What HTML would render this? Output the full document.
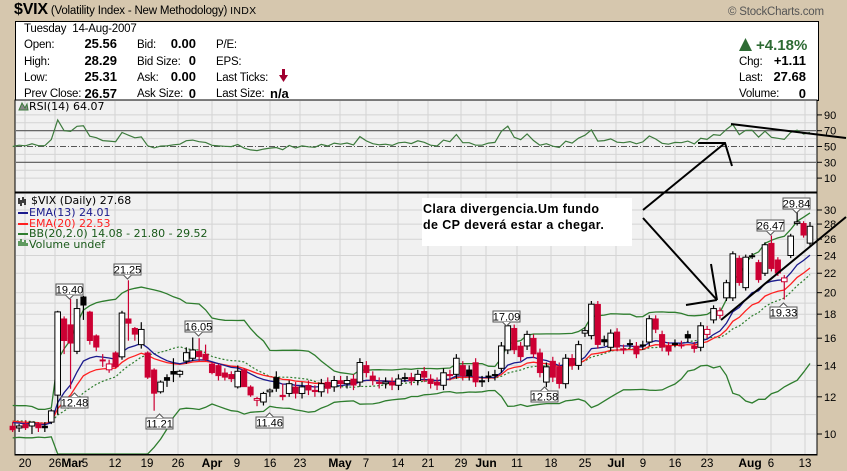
<!DOCTYPE html>
<html style="overflow:hidden;width:847px;height:471px"><head><meta charset="utf-8"><style>
html,body{overflow:hidden}
body{margin:0;width:847px;height:471px;background:#d6c7ae;position:relative;overflow:hidden;font-family:"Liberation Sans",Arial,sans-serif;}
.a{position:absolute;white-space:nowrap;font-size:11.5px;letter-spacing:-0.2px;color:#000;line-height:14px}
.b{font-weight:bold;font-size:13px;letter-spacing:0}
.r{text-align:right}
svg{display:block}
</style></head><body>
<div class="a" style="left:14px;top:3px;"><span style="font-weight:bold;font-size:16px">$VIX</span> <span style="font-size:11.5px">(Volatility Index - New Methodology)</span> <span style="font-size:10.5px;letter-spacing:.3px">INDX</span></div>
<div class="a" style="left:728px;top:5px;font-size:11.5px;color:#555">© StockCharts.com</div>
<div style="position:absolute;left:15px;top:21px;width:802px;height:78px;background:#fff;border:1px solid #000;"></div>
<div class="a" style="left:24px;top:22px">Tuesday&nbsp; 14-Aug-2007</div>
<div class="a" style="left:24px;top:38px">Open:</div><div class="a b r" style="left:60px;width:57px;top:37px">25.56</div>
<div class="a" style="left:24px;top:55px">High:</div><div class="a b r" style="left:60px;width:57px;top:54px">28.29</div>
<div class="a" style="left:24px;top:71px">Low:</div><div class="a b r" style="left:60px;width:57px;top:70px">25.31</div>
<div class="a" style="left:24px;top:87px">Prev Close:</div><div class="a b r" style="left:60px;width:57px;top:87px">26.57</div>
<div class="a" style="left:137px;top:38px">Bid:</div><div class="a b r" style="left:150px;width:46px;top:37px">0.00</div>
<div class="a" style="left:137px;top:55px">Bid Size:</div><div class="a b r" style="left:150px;width:46px;top:54px">0</div>
<div class="a" style="left:137px;top:71px">Ask:</div><div class="a b r" style="left:150px;width:46px;top:70px">0.00</div>
<div class="a" style="left:137px;top:87px">Ask Size:</div><div class="a b r" style="left:150px;width:46px;top:87px">0</div>
<div class="a" style="left:216px;top:38px">P/E:</div>
<div class="a" style="left:216px;top:55px">EPS:</div>
<div class="a" style="left:216px;top:71px">Last Ticks:</div>
<div class="a" style="left:216px;top:87px">Last Size:</div><div class="a b" style="left:270px;top:87px">n/a</div>
<svg style="position:absolute;left:278px;top:69px" width="12" height="14"><rect x="4" y="0" width="3" height="8" fill="#a00030"/><polygon points="1,6 10,6 5.5,13" fill="#a00030"/></svg>
<svg style="position:absolute;left:739px;top:38px" width="14" height="14"><polygon points="0,13 13,13 6.5,0" fill="#2e6b34"/></svg>
<div class="a" style="left:756px;top:37px;font-size:15px;font-weight:bold;color:#2e6b34;line-height:17px;letter-spacing:0">+4.18%</div>
<div class="a" style="left:739px;top:55px">Chg:</div><div class="a b r" style="left:760px;width:46px;top:54px">+1.11</div>
<div class="a" style="left:739px;top:71px">Last:</div><div class="a b r" style="left:760px;width:46px;top:70px">27.68</div>
<div class="a" style="left:739px;top:87px">Volume:</div><div class="a b r" style="left:760px;width:46px;top:87px">0</div>

<svg id="s" style="position:absolute;left:0;top:0;overflow:hidden" width="847" height="471" xmlns="http://www.w3.org/2000/svg"></svg>
<script>
var NS="http://www.w3.org/2000/svg",S=document.getElementById('s');
function el(t,a,txt){var e=document.createElementNS(NS,t);for(var k in a)e.setAttribute(k,a[k]);if(txt!=null)e.textContent=txt;S.appendChild(e);return e;}
var seed=[10.9,10.4,11.3,11.6,10.8,10.2,10.5,11.1,11.5,10.6,10.1,10.9,11.4,10.7,10.3,11.0,10.6,10.1,10.5,11.2,11.0,10.4,10.2,10.6];
var D=[[10.4,10.6,10.1,10.2],[10.3,10.5,10.1,10.4],[10.5,10.7,10.2,10.3],[10.4,10.6,10.0,10.6],[10.5,10.6,10.1,10.3],[10.4,10.6,10.1,10.3],[10.6,11.3,10.5,11.2],[12.1,18.3,11.0,18.2],[17.6,17.8,14.8,15.8],[17.1,19.4,12.48,15.6],[15.0,19.4,14.8,18.5],[19.6,19.7,17.5,18.8],[18.2,18.3,15.5,15.8],[16.2,16.3,15.0,15.3],[14.4,14.8,13.9,14.3],[13.7,14.4,13.5,14.1],[14.9,15.0,13.8,13.9],[14.6,18.3,14.4,18.1],[17.6,21.25,15.8,17.2],[16.8,16.9,15.8,16.3],[15.5,17.3,15.2,16.7],[14.9,15.0,13.1,13.2],[13.7,13.8,11.21,12.2],[12.3,13.0,12.2,12.9],[13.2,13.4,12.6,13.0],[13.6,14.5,12.9,13.4],[13.4,13.7,13.2,13.6],[14.3,15.3,14.1,14.9],[14.5,16.05,14.3,15.1],[15.0,16.0,14.3,14.6],[14.8,15.5,14.3,14.4],[14.1,14.2,13.4,13.5],[14.0,14.1,13.0,13.3],[13.5,13.8,13.0,13.2],[13.4,13.6,12.9,13.1],[12.6,14.0,12.5,13.6],[13.7,13.8,12.6,12.6],[12.6,12.7,12.0,12.1],[11.8,12.0,11.46,11.9],[11.7,12.3,11.5,12.2],[12.3,12.5,12.0,12.4],[13.2,13.6,12.3,12.5],[12.1,12.8,11.8,12.0],[12.2,13.0,12.0,12.8]];
var M=[[12.6,12.2],[12.2,12.6],[12.7,12.4],[12.4,12.3],[12.3,12.8],[12.9,12.5],[12.6,13.0],
[13.0,12.8],[12.8,13.0],[13.1,12.7],[12.9,14.2],[14.0,13.5],[13.3,13.0],[12.9,12.8],[12.8,12.9],[12.9,12.7],[12.7,13.1],[13.2,13.2],[13.2,13.0],[13.0,13.4],[13.6,13.2],[13.1,12.8],[12.9,12.7],[12.7,13.5],[13.4,13.3],[13.4,14.5],[14.0,13.3],[13.7,13.3],[14.2,12.9],
[13.0,12.9],[13.3,13.2],[13.4,13.3],[13.8,15.4],[15.1,17.0,17.09],[16.8,15.1],[15.4,14.6],[15.4,16.3],[16.0,14.8],[14.9,13.5],[12.9,13.9,0,12.58],[14.3,13.2],[13.9,12.8],[12.8,14.5],[14.5,14.0],[14.0,15.5],[16.4,16.6],[16.2,18.9],[18.9,15.5],[15.9,15.7],[15.3,16.4],
[16.5,15.3],[15.2,15.1],[15.6,15.5],[15.4,14.8],[15.5,15.4],[15.7,17.6],[17.6,16.7],[16.3,15.3],[15.4,15.0],[15.6,15.6],[15.5,15.5],[16.3,16.0],[15.4,15.2],[15.3,17.0],
[16.3,16.7],[17.5,18.5],[17.9,18.3],[19.5,21.0],[19.5,24.2],[23.7,21.0],[20.5,23.8],[24.0,23.9],[23.2,21.3],[22.0,25.3],[25.5,22.5,26.47],[23.5,22.0],[21.1,21.5,0,19.33],[24.0,26.4],[28.1,28.3,29.84],[28.1,26.5],[25.5,27.7,28.29]];
M.forEach(function(m){var o=m[0],c=m[1];var h=m[2]||Math.max(o,c)+0.3,l=m[3]||Math.min(o,c)-0.3;D.push([o,h,l,c]);});
var N=D.length;
function X(k){return 810-(N-1-k)*6.43;}
function Y(p){if(!(p>0))p=8;var y=903.5-203.9*Math.log(p);return Math.max(194,Math.min(454,y));}
function RY(v){return 186-0.79*v;}
el('rect',{x:15,y:100,width:802,height:92,fill:'#f1f1f1',stroke:'#000','stroke-width':1});
el('rect',{x:15,y:193,width:802,height:262,fill:'#f1f1f1',stroke:'#000','stroke-width':1});
var dl=[[25,'20'],[55,'26'],[72,'Mar'],[85,'5'],[115,'12'],[147,'19'],[178,'26'],[212,'Apr'],[237,'9'],[270,'16'],[300,'23'],[340,'May'],[366,'7'],[398,'14'],[428,'21'],[461,'29'],[486,'Jun'],[517,'11'],[551,'18'],[585,'25'],[616,'Jul'],[643,'9'],[675,'16'],[707,'23'],[750,'Aug'],[771,'6'],[805,'13']];
var g='';
dl.forEach(function(d){if(d[1]!='Mar'&&d[1]!='Aug'){g+='M'+d[0]+' 101V191M'+d[0]+' 194V454';}});
[10,11,12,13,14,15,16,17,18,19,20,22,24,26,28,30].forEach(function(p){var y=Y(p).toFixed(1);g+='M16 '+y+'H816';});
[90,80,60,40,20,10].forEach(function(v){var y=RY(v).toFixed(1);g+='M16 '+y+'H816';});
el('path',{d:g,stroke:'#d4d4d4','stroke-width':1,fill:'none'});
dl.forEach(function(d){var big=/[a-z]/i.test(d[1]);el('text',{x:d[0],y:467,'text-anchor':'middle','font-size':big?'12':'11.5','font-weight':big?'bold':'normal','font-family':'Liberation Sans, sans-serif',fill:'#000'},d[1]);});
[10,12,14,16,18,20,22,24,26,28,30].forEach(function(p){var y=Y(p);el('path',{d:'M817 '+y+'H822',stroke:'#000'});el('text',{x:824,y:y+4,'font-size':'11','font-family':'Liberation Sans, sans-serif'},p);});
[90,70,50,30,10].forEach(function(v){var y=RY(v);el('path',{d:'M817 '+y+'H822',stroke:'#000'});el('text',{x:824,y:y+4,'font-size':'11','font-family':'Liberation Sans, sans-serif'},v);});
var C=seed.concat(D.map(function(d){return d[3];}));var off=seed.length;
function ema(n){var a=[],k=2/(n+1),e=C[0];for(var i=0;i<C.length;i++){e=i?C[i]*k+e*(1-k):C[i];a.push(e);}return a;}
var e13=ema(13),e20=ema(20),sm=[],up=[],lo=[];
for(var i=0;i<C.length;i++){var s=0,q=0,n=Math.min(20,i+1);for(var j=i-n+1;j<=i;j++){s+=C[j];}var m=s/n;for(j=i-n+1;j<=i;j++)q+=(C[j]-m)*(C[j]-m);var sd=Math.sqrt(q/n);sm.push(m);up.push(m+2*sd);lo.push(m-2*sd);}
var rsi=[],ag=0,al=0;for(i=1;i<C.length;i++){var ch=C[i]-C[i-1];var gg=ch>0?ch:0,ll=ch<0?-ch:0;if(i<=14){ag+=gg/14;al+=ll/14;}else{ag=(ag*13+gg)/14;al=(al*13+ll)/14;}rsi[i]=100-100/(1+ag/(al||1e-9));}
function line(arr,st){var p='';for(var k=0;k<N;k++){p+=(k?'L':'M')+X(k).toFixed(1)+' '+Y(arr[k+off]).toFixed(1);}el('path',Object.assign({d:p,fill:'none'},st));}
line(up,{stroke:'#2e7d2e','stroke-width':1.3});line(lo,{stroke:'#2e7d2e','stroke-width':1.3});
line(sm,{stroke:'#2e7d2e','stroke-width':1.2,'stroke-dasharray':'2,2'});
line(e20,{stroke:'#ff2020','stroke-width':1.3});line(e13,{stroke:'#1a1a8c','stroke-width':1.3});
el('rect',{x:15,y:454,width:802,height:1,fill:'#000'});
el('path',{d:'M16 '+RY(70)+'H816M16 '+RY(30)+'H816',stroke:'#555','stroke-width':1.2});
el('path',{d:'M16 '+RY(50)+'H816',stroke:'#555','stroke-width':1,'stroke-dasharray':'6,2,1,2'});
var rp='';for(k=0;k<N;k++){rp+=(k?'L':'M')+X(k).toFixed(1)+' '+(RY(rsi[k+off])-3).toFixed(1);}
el('path',{d:rp,fill:'none',stroke:'#3d7a3d','stroke-width':1.2});
for(k=0;k<N;k++){var d=D[k],x=X(k),pc=C[k+off-1];var red=d[3]<pc,hol=d[3]>d[0];var col=red?'#cc0033':'#000';
var yt=Y(Math.max(d[0],d[3])),yb=Y(Math.min(d[0],d[3]));if(yb-yt<1.5){yb=yt+1.5;}
el('path',{d:'M'+x+' '+Y(d[1]).toFixed(1)+'V'+Y(d[2]).toFixed(1),stroke:col,'stroke-width':1.2});
el('rect',{x:x-2.8,y:yt,width:5.6,height:yb-yt,fill:hol?'#fff':col,stroke:col,'stroke-width':hol?1:0.5});}
function lab(t,x,y,dn){el('rect',{x:x,y:y,width:27,height:11,fill:'#fff',stroke:'#555','stroke-width':1});el('text',{x:x+13.5,y:y+9.5,'text-anchor':'middle','font-size':'11','font-family':'Liberation Sans, sans-serif'},t);
var cx=x+13.5;if(dn)el('path',{d:'M'+(cx-4)+' '+(y+11)+'L'+cx+' '+(y+15)+'L'+(cx+4)+' '+(y+11),fill:'#fff',stroke:'#555'});else el('path',{d:'M'+(cx-4)+' '+y+'L'+cx+' '+(y-4)+'L'+(cx+4)+' '+y,fill:'#fff',stroke:'#555'});}
lab('29.84',783,198,1);lab('26.47',757,220,1);lab('19.33',770,307,0);lab('21.25',114,264,1);lab('19.40',56,284,1);lab('12.48',61,397,0);lab('11.21',146,418,0);lab('16.05',185,321,1);lab('11.46',256,417,0);lab('17.09',493,311,1);lab('12.58',531,391,0);
var f={'font-size':'11','font-family':'DejaVu Sans, sans-serif'};
el('text',Object.assign({x:29,y:110,fill:'#000'},f),'RSI(14) 64.07');
el('path',{d:'M19 110L22 103L25 108L27 104L28 110Z',fill:'#888',stroke:'#3d7a3d'});
el('text',Object.assign({x:31,y:204,fill:'#000'},f),'$VIX (Daily) 27.68');
el('path',{d:'M19 198V204M21 200V206M23 197V203M25 199V205',stroke:'#000','stroke-width':1.5});
el('path',{d:'M18 213H28',stroke:'#1a1a8c','stroke-width':2});el('text',Object.assign({x:29,y:216,fill:'#1a1a8c'},f),'EMA(13) 24.01');
el('path',{d:'M18 224H28',stroke:'#ff2020','stroke-width':2});el('text',Object.assign({x:29,y:227,fill:'#ff2020'},f),'EMA(20) 22.53');
el('path',{d:'M18 234H28',stroke:'#2e7d2e','stroke-width':2});el('text',Object.assign({x:29,y:237,fill:'#1a5a1a'},f),'BB(20,2.0) 14.08 - 21.80 - 29.52');
el('path',{d:'M19 246V241M21 246V239M23 246V242M25 246V240M27 246V243',stroke:'#2e7d2e','stroke-width':1.5});el('text',Object.assign({x:29,y:248,fill:'#1a5a1a'},f),'Volume undef');
el('rect',{x:422,y:198,width:210,height:48,fill:'#fff'});
el('text',{x:423,y:213,'font-size':'12.5','font-weight':'bold','font-family':'Liberation Sans, sans-serif','letter-spacing':'0.4'},'Clara divergencia.Um fundo');
el('text',{x:423,y:229,'font-size':'12.5','font-weight':'bold','font-family':'Liberation Sans, sans-serif','letter-spacing':'0.4'},'de CP deverá estar a chegar.');
el('path',{d:'M731 124L846 138M698 143H725L732 166M643 210L725 143M643 218L717 300M711 264L717 300M686 305L717 300M721 320L846 217',stroke:'#000','stroke-width':2,fill:'none'});
</script>
</body></html>
